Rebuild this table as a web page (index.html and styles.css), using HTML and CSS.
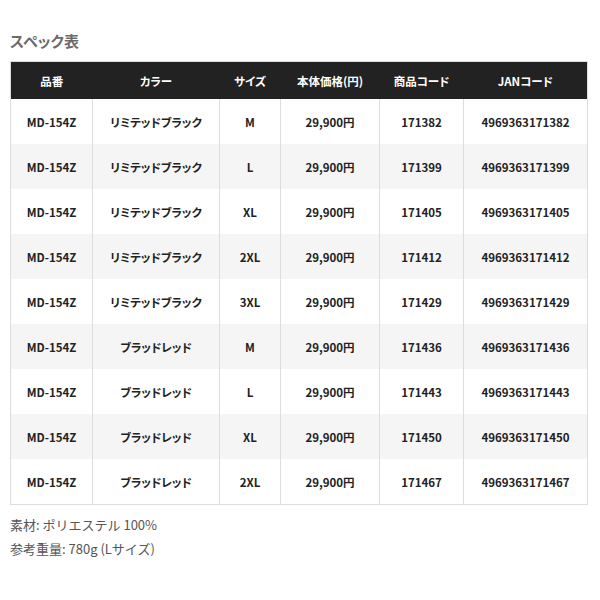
FILE: index.html
```html
<!DOCTYPE html>
<html lang="ja">
<head>
<meta charset="utf-8">
<link rel="stylesheet" href="styles.css">
</head>
<body>
<div class="spec">
  <h2 class="spec-title">スペック表</h2>
  <table class="spec-table">
    <colgroup>
      <col class="c1"><col class="c2"><col class="c3"><col class="c4"><col class="c5"><col class="c6">
    </colgroup>
    <thead>
      <tr><th>品番</th><th>カラー</th><th>サイズ</th><th>本体価格(円)</th><th>商品コード</th><th>JANコード</th></tr>
    </thead>
    <tbody>
      <tr><td>MD-154Z</td><td>リミテッドブラック</td><td>M</td><td>29,900円</td><td>171382</td><td>4969363171382</td></tr>
      <tr><td>MD-154Z</td><td>リミテッドブラック</td><td>L</td><td>29,900円</td><td>171399</td><td>4969363171399</td></tr>
      <tr><td>MD-154Z</td><td>リミテッドブラック</td><td>XL</td><td>29,900円</td><td>171405</td><td>4969363171405</td></tr>
      <tr><td>MD-154Z</td><td>リミテッドブラック</td><td>2XL</td><td>29,900円</td><td>171412</td><td>4969363171412</td></tr>
      <tr><td>MD-154Z</td><td>リミテッドブラック</td><td>3XL</td><td>29,900円</td><td>171429</td><td>4969363171429</td></tr>
      <tr><td>MD-154Z</td><td>ブラッドレッド</td><td>M</td><td>29,900円</td><td>171436</td><td>4969363171436</td></tr>
      <tr><td>MD-154Z</td><td>ブラッドレッド</td><td>L</td><td>29,900円</td><td>171443</td><td>4969363171443</td></tr>
      <tr><td>MD-154Z</td><td>ブラッドレッド</td><td>XL</td><td>29,900円</td><td>171450</td><td>4969363171450</td></tr>
      <tr><td>MD-154Z</td><td>ブラッドレッド</td><td>2XL</td><td>29,900円</td><td>171467</td><td>4969363171467</td></tr>
    </tbody>
  </table>
  <div class="notes">
    <p>素材: ポリエステル 100%</p>
    <p>参考重量: 780g (Lサイズ)</p>
  </div>
</div>
</body>
</html>
```
FILE: styles.css
```css
html, body {
  margin: 0;
  padding: 0;
  background: #fff;
}
body {
  font-family: "Noto Sans CJK JP", "Noto Sans", sans-serif;
  color: #222;
}
.spec {
  padding: 30px 12px 0 10px;
}
.spec-title {
  margin: 0 0 9px 0;
  font-size: 15px;
  line-height: 22px;
  font-weight: 700;
  color: #6b6b6b;
  font-feature-settings: "palt";
}
.spec-table {
  width: 578px;
  border-collapse: collapse;
  table-layout: fixed;
  border: 1px solid #ddd;
  font-size: 11.5px;
  font-weight: 700;
  font-feature-settings: "palt";
}
.c1 { width: 82px; }
.c2 { width: 127px; }
.c3 { width: 61px; }
.c4 { width: 99px; }
.c5 { width: 84px; }
.c6 { width: auto; }
.spec-table th {
  background: #222;
  color: #fff;
  height: 37px;
  padding: 0;
  font-weight: 700;
  text-align: center;
  border: none;
}
.spec-table td {
  height: 45px;
  padding: 0;
  text-align: center;
  border-left: 1px solid #ddd;
  border-right: 1px solid #ddd;
}
.spec-table tbody tr:nth-child(even) td {
  background: #f5f5f5;
}
.notes {
  margin-top: 8px;
  font-size: 13px;
  line-height: 24px;
  color: #555;
}
.notes p {
  margin: 0;
}
```
